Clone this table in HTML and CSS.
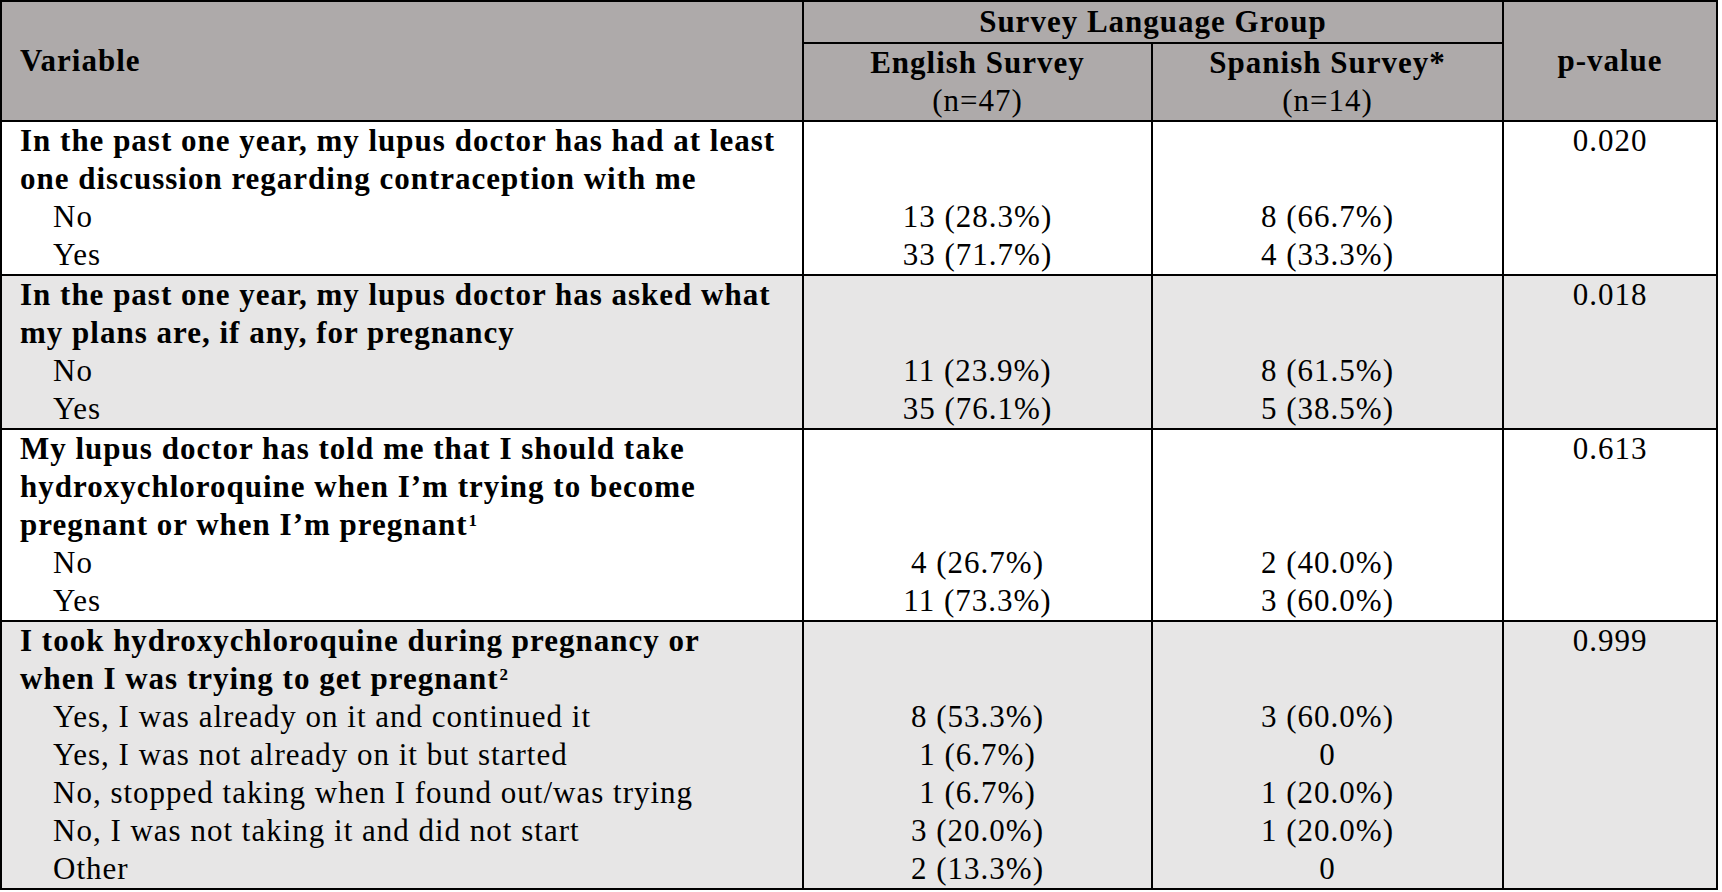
FILE: index.html
```html
<!DOCTYPE html>
<html lang="en">
<head>
<meta charset="utf-8">
<title>Survey Language Group</title>
<link rel="stylesheet" href="styles.css">
</head>
<body>
<table class="stats">
  <colgroup>
    <col class="c-var">
    <col class="c-num">
    <col class="c-num2">
    <col class="c-p">
  </colgroup>
  <thead>
    <tr>
      <th class="h-var" rowspan="2">Variable</th>
      <th class="h-group" colspan="2">Survey Language Group</th>
      <th class="h-p" rowspan="2">p-value</th>
    </tr>
    <tr>
      <th class="h-sub"><div>English Survey</div><div class="n">(n=47)</div></th>
      <th class="h-sub"><div>Spanish Survey*</div><div class="n">(n=14)</div></th>
    </tr>
  </thead>
  <tbody>
    <tr>
      <td class="var">
        <div class="q">In the past one year, my lupus doctor has had at least</div>
        <div class="q">one discussion regarding contraception with me</div>
        <div class="sub">No</div>
        <div class="sub">Yes</div>
      </td>
      <td class="num"><div></div><div></div><div>13 (28.3%)</div><div>33 (71.7%)</div></td>
      <td class="num"><div></div><div></div><div>8 (66.7%)</div><div>4 (33.3%)</div></td>
      <td class="num"><div>0.020</div></td>
    </tr>
    <tr class="alt">
      <td class="var">
        <div class="q">In the past one year, my lupus doctor has asked what</div>
        <div class="q">my plans are, if any, for pregnancy</div>
        <div class="sub">No</div>
        <div class="sub">Yes</div>
      </td>
      <td class="num"><div></div><div></div><div>11 (23.9%)</div><div>35 (76.1%)</div></td>
      <td class="num"><div></div><div></div><div>8 (61.5%)</div><div>5 (38.5%)</div></td>
      <td class="num"><div>0.018</div></td>
    </tr>
    <tr>
      <td class="var">
        <div class="q">My lupus doctor has told me that I should take</div>
        <div class="q">hydroxychloroquine when I’m trying to become</div>
        <div class="q">pregnant or when I’m pregnant<span class="note">1</span></div>
        <div class="sub">No</div>
        <div class="sub">Yes</div>
      </td>
      <td class="num"><div></div><div></div><div></div><div>4 (26.7%)</div><div>11 (73.3%)</div></td>
      <td class="num"><div></div><div></div><div></div><div>2 (40.0%)</div><div>3 (60.0%)</div></td>
      <td class="num"><div>0.613</div></td>
    </tr>
    <tr class="alt">
      <td class="var">
        <div class="q">I took hydroxychloroquine during pregnancy or</div>
        <div class="q">when I was trying to get pregnant<span class="note">2</span></div>
        <div class="sub">Yes, I was already on it and continued it</div>
        <div class="sub">Yes, I was not already on it but started</div>
        <div class="sub">No, stopped taking when I found out/was trying</div>
        <div class="sub">No, I was not taking it and did not start</div>
        <div class="sub">Other</div>
      </td>
      <td class="num"><div></div><div></div><div>8 (53.3%)</div><div>1 (6.7%)</div><div>1 (6.7%)</div><div>3 (20.0%)</div><div>2 (13.3%)</div></td>
      <td class="num"><div></div><div></div><div>3 (60.0%)</div><div>0</div><div>1 (20.0%)</div><div>1 (20.0%)</div><div>0</div></td>
      <td class="num"><div>0.999</div></td>
    </tr>
  </tbody>
</table>
</body>
</html>
```

FILE: styles.css
```css
html, body {
  margin: 0;
  padding: 0;
  background: #ffffff;
}

body {
  font-family: "Liberation Serif", "Times New Roman", serif;
  font-size: 31px;
  letter-spacing: 1px;
  line-height: 38px;
  color: #000000;
}

.stats {
  width: 1718px;
  table-layout: fixed;
  border-collapse: collapse;
  border: 2px solid #000000;
}

.c-var { width: 802px; }
.c-num { width: 349px; }
.c-num2 { width: 351px; }
.c-p { width: 214px; }

.stats th,
.stats td {
  border: 2px solid #000000;
  padding: 0 15px;
  vertical-align: top;
}

.stats th.h-var,
.stats td.var {
  padding-left: 18px;
}

.stats thead th {
  background: #aeaaaa;
  font-weight: bold;
  text-align: center;
  vertical-align: middle;
}

.stats thead th.h-var {
  text-align: left;
}

.stats thead th.h-group {
  height: 39px;
  padding: 0 15px 1px;
}

.stats thead th.h-sub div {
  height: 38px;
}

.stats thead .n {
  font-weight: normal;
}

.stats tbody div {
  height: 38px;
  white-space: nowrap;
}

.q {
  font-weight: bold;
}

.sub {
  padding-left: 33px;
}

.num {
  text-align: center;
}

.alt td {
  background: #e7e6e6;
}

.note {
  font-size: 17px;
  line-height: 0;
  position: relative;
  top: -9px;
  letter-spacing: 0;
  margin-left: 1px;
}
```
